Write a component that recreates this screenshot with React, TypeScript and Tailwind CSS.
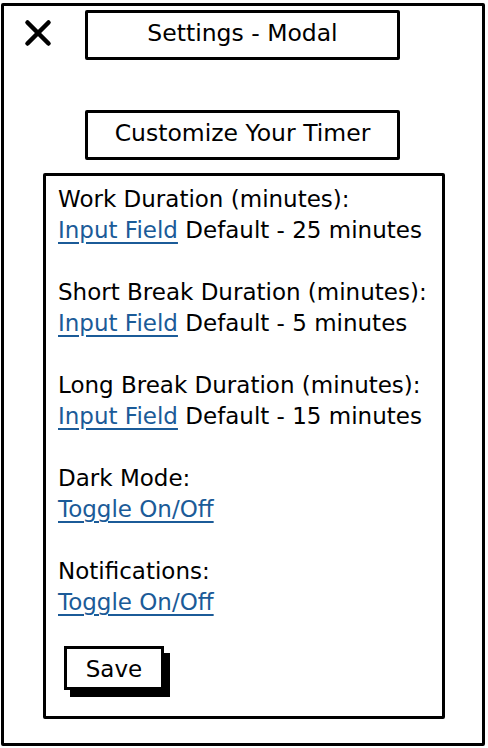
import { X } from 'lucide-react';

const font = { fontFamily: '"DejaVu Sans", "Liberation Sans", sans-serif' };

function Field({ label, link, rest }: { label: string; link: string; rest?: string }) {
  return (
    <div className="mb-[31px]">
      <div>{label}</div>
      <div>
        <span className="text-[#1b5b98] underline underline-offset-[4px] decoration-[2px]">{link}</span>
        {rest && <span> {rest}</span>}
      </div>
    </div>
  );
}

export default function App() {
  return (
    <div className="w-[488px] h-[748px] bg-white text-black overflow-hidden" style={font}>
      <div className="ml-[1px] mt-[3px] w-[484px] h-[743px] border-[3px] border-black rounded-[2px] flex flex-col">
        {/* header */}
        <div className="flex items-start">
          <X className="ml-[13px] mt-[6px] w-[42px] h-[42px]" strokeWidth={2.6} />
          <div className="ml-[26px] mt-[4px] w-[315px] h-[50px] border-[3px] border-black rounded-[2px] flex items-center justify-center text-[23.5px] pb-[3px]">
            Settings - Modal
          </div>
        </div>

        <div className="ml-[81px] mt-[50px] w-[315px] h-[50px] border-[3px] border-black rounded-[2px] flex items-center justify-center text-[23.5px] pb-[3px]">
          Customize Your Timer
        </div>

        {/* content */}
        <div className="ml-[39px] mt-[13px] w-[402px] h-[546px] border-[3px] border-black rounded-[2px] pl-[12px] pt-[8px] text-[23px] leading-[31px]">
          <Field label="Work Duration (minutes):" link="Input Field" rest="Default - 25 minutes" />
          <Field label="Short Break Duration (minutes):" link="Input Field" rest="Default - 5 minutes" />
          <Field label="Long Break Duration (minutes):" link="Input Field" rest="Default - 15 minutes" />
          <Field label="Dark Mode:" link="Toggle On/Off" />
          <Field label="Notifications:" link="Toggle On/Off" />
          <button className="ml-[6px] -mt-[3px] w-[100px] h-[44px] border-[3px] border-black bg-white shadow-[6px_7px_0_#000] flex items-center justify-center text-[23px] pt-[2px]">
            Save
          </button>
        </div>
      </div>
    </div>
  );
}
